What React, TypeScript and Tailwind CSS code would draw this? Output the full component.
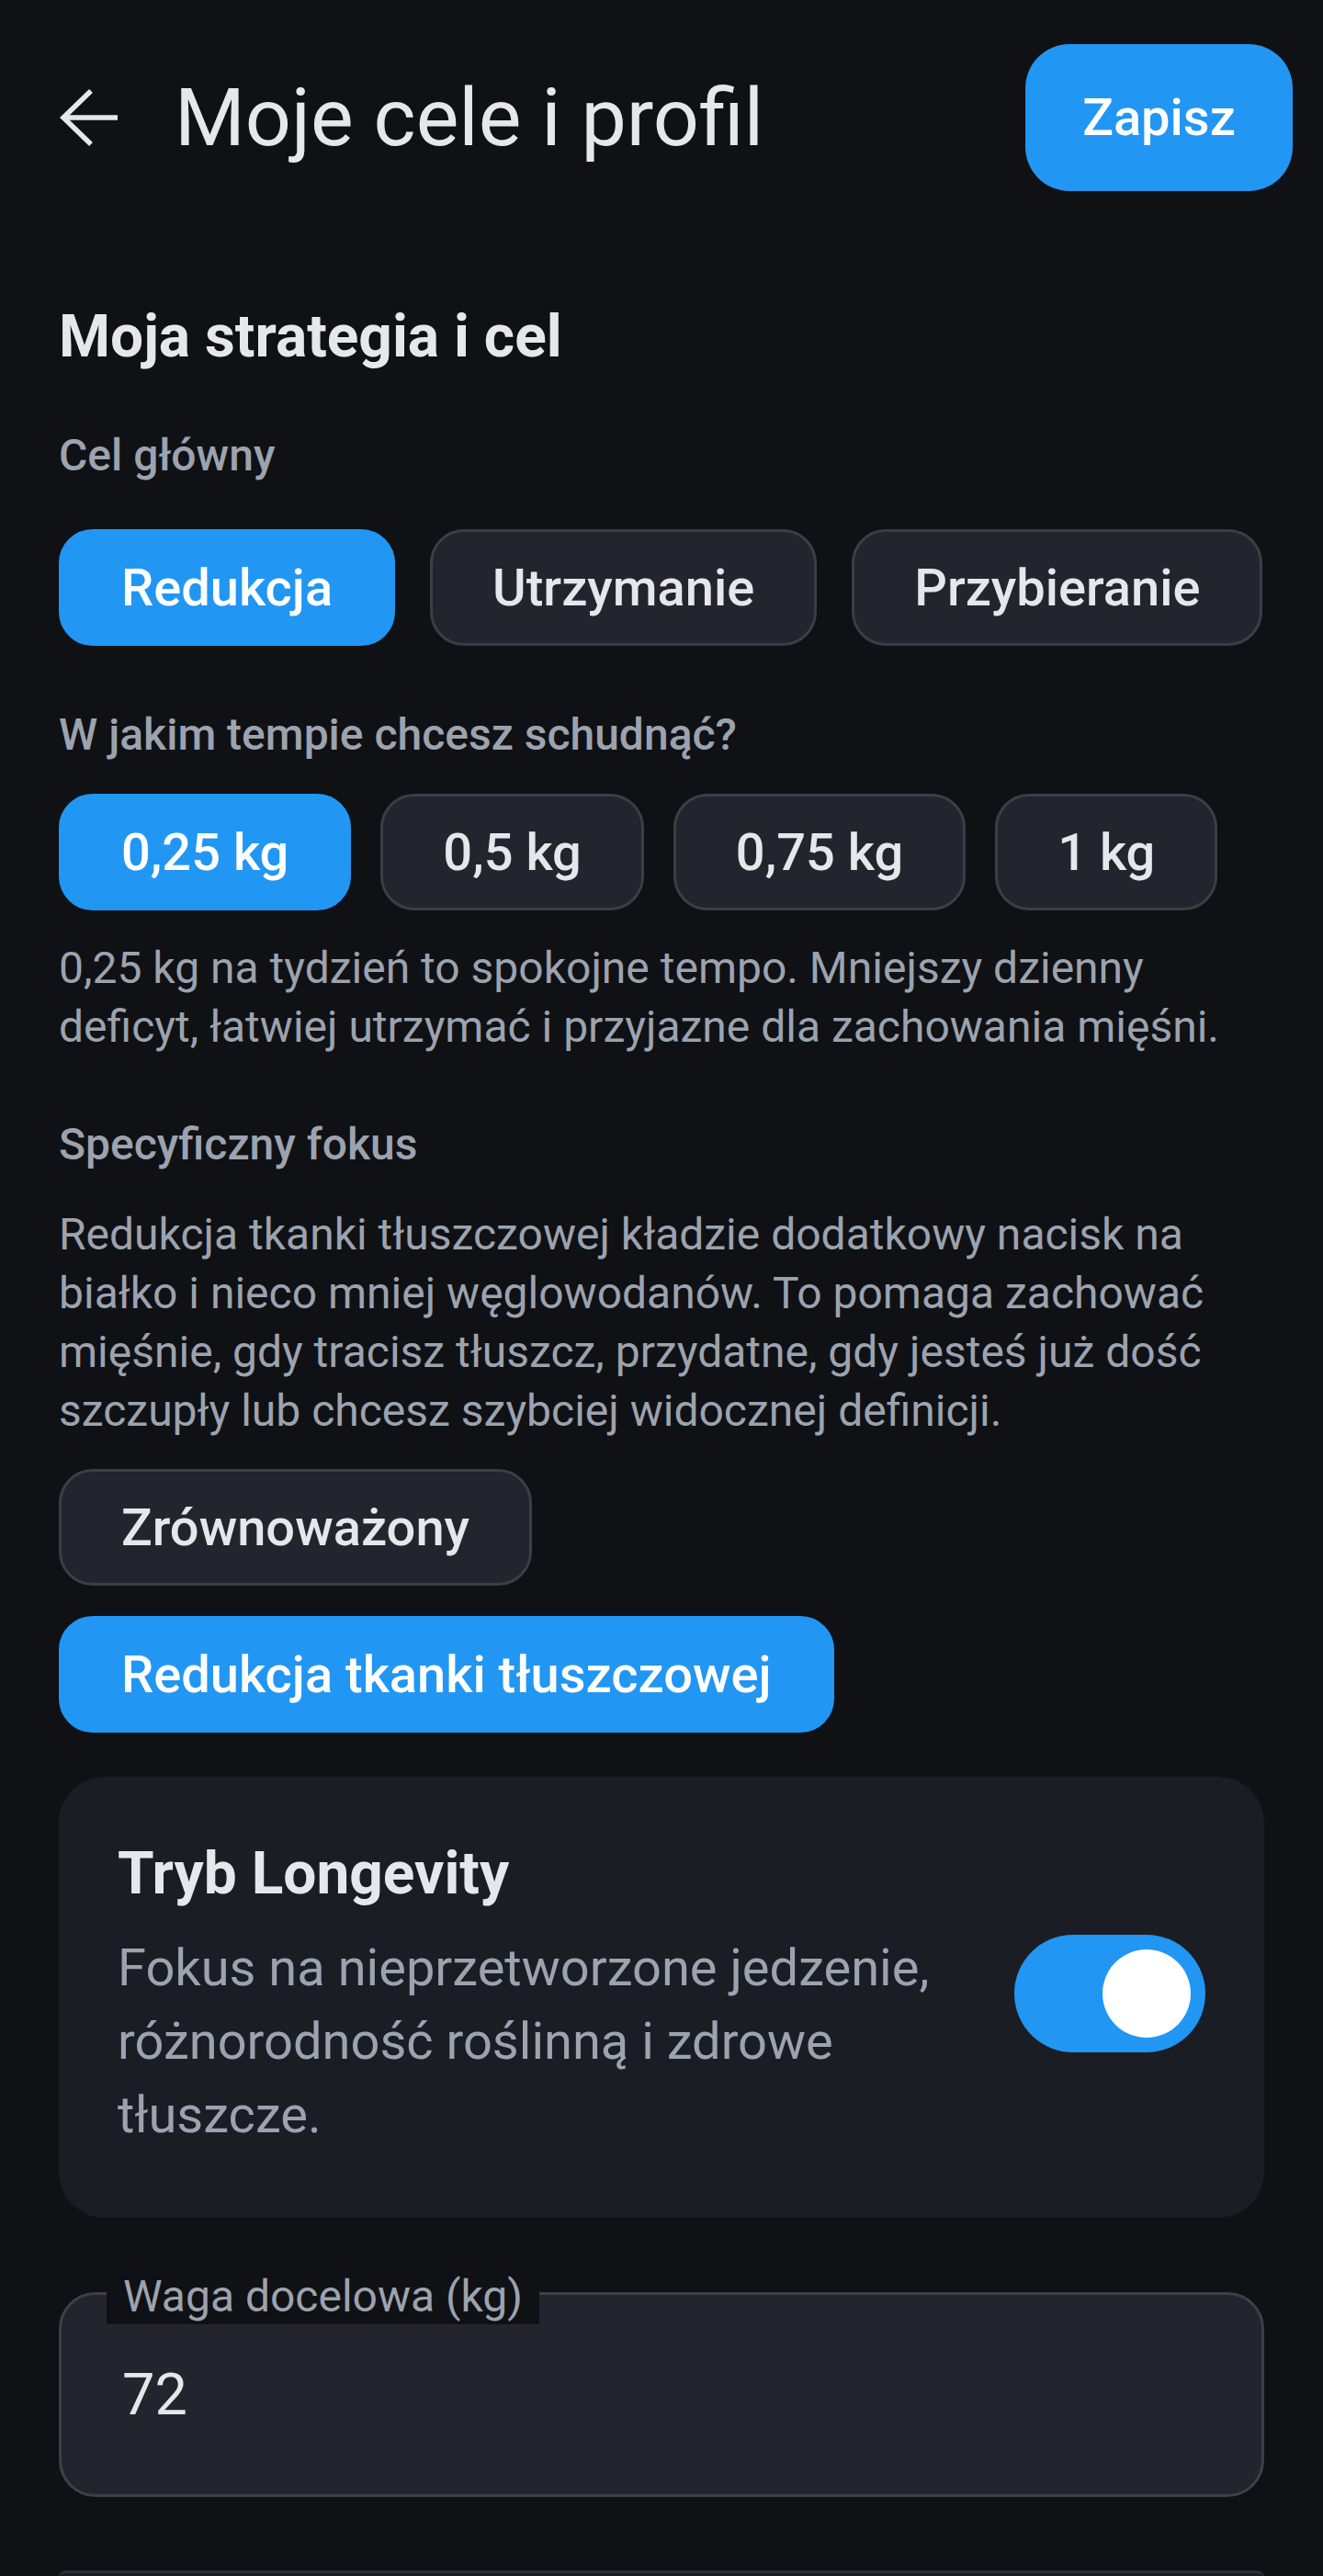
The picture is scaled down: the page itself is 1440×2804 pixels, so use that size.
import React from 'react'

const Chip: React.FC<{ label: string; active?: boolean }> = ({ label, active }) => (
  <button
    className={
      active
        ? 'h-[127px] px-[65px] rounded-[37px] border-[3px] border-[#2296f3] bg-[#2296f3] text-white text-[56px] font-medium leading-none whitespace-nowrap'
        : 'h-[127px] px-[65px] rounded-[37px] border-[3px] border-[#3b3e48] bg-[#22252e] text-[#e6e7eb] text-[56px] font-medium leading-none whitespace-nowrap'
    }
  >
    {label}
  </button>
)

export default function App() {
  const goals = ['Redukcja', 'Utrzymanie', 'Przybieranie']
  const paces = ['0,25 kg', '0,5 kg', '0,75 kg', '1 kg']

  return (
    <div className="min-h-screen bg-[#101115] font-['Roboto',sans-serif] text-[#e6e7eb]">
      {/* top bar */}
      <div className="flex items-center pl-[65px] pr-[33px] pt-[48px]">
        <svg width="63" height="64" viewBox="0 0 63 64" fill="none" stroke="#e6e7eb" strokeWidth="5.5">
          <path d="M34 3 L4 32 L34 61" />
          <path d="M4 32 H63" />
        </svg>
        <h1 className="ml-[62px] flex-1 text-[88px] leading-[100px] font-normal text-[#e6e7eb]">Moje cele i profil</h1>
        <button className="w-[291px] h-[160px] rounded-[48px] bg-[#2296f3] text-white text-[56px] font-medium">
          Zapisz
        </button>
      </div>

      <div className="px-[64px]">
        <h2 className="mt-[121px] text-[64px] leading-[76px] font-bold text-[#e6e7eb]">Moja strategia i cel</h2>

        <p className="mt-[59px] text-[48px] leading-[64px] font-medium text-[#9ca3af]">Cel główny</p>
        <div className="mt-[48px] flex gap-[38px]">
          {goals.map((g, i) => (
            <Chip key={g} label={g} active={i === 0} />
          ))}
        </div>

        <p className="mt-[65px] text-[48px] leading-[64px] font-medium text-[#9ca3af]">W jakim tempie chcesz schudnąć?</p>
        <div className="mt-[32px] flex gap-[32px]">
          {paces.map((p, i) => (
            <Chip key={p} label={p} active={i === 0} />
          ))}
        </div>
        <p className="mt-[31px] text-[48px] leading-[64px] text-[#9ca3af]">
          0,25 kg na tydzień to spokojne tempo. Mniejszy dzienny deficyt, łatwiej utrzymać i przyjazne dla zachowania mięśni.
        </p>

        <p className="mt-[64px] text-[48px] leading-[64px] font-medium text-[#9ca3af]">Specyficzny fokus</p>
        <p className="mt-[34px] text-[48px] leading-[64px] text-[#9ca3af]">
          Redukcja tkanki tłuszczowej kładzie dodatkowy nacisk na białko i nieco mniej węglowodanów. To pomaga zachować mięśnie, gdy tracisz tłuszcz, przydatne, gdy jesteś już dość szczupły lub chcesz szybciej widocznej definicji.
        </p>
        <div className="mt-[31px] flex flex-col items-start gap-[33px]">
          <Chip label="Zrównoważony" />
          <Chip label="Redukcja tkanki tłuszczowej" active />
        </div>

        {/* longevity card */}
        <div className="mt-[48px] rounded-[50px] bg-[#1b1d24] px-[64px] pt-[64px] pb-[72px] flex items-center gap-[48px]">
          <div className="flex-1">
            <p className="text-[64px] leading-[84px] font-bold text-[#e6e7eb]">Tryb Longevity</p>
            <p className="mt-[20px] text-[56px] leading-[80px] text-[#9ca3af]">
              Fokus na nieprzetworzone jedzenie, różnorodność roślinną i zdrowe tłuszcze.
            </p>
          </div>
          <div className="w-[208px] h-[128px] shrink-0 rounded-full bg-[#2296f3] flex items-center justify-end pr-[16px]">
            <div className="w-[96px] h-[96px] rounded-full bg-white" />
          </div>
        </div>

        {/* target weight field */}
        <div className="relative mt-[81px] h-[223px] rounded-[40px] border-[3px] border-[#3d404a] bg-[#22252e] flex items-center pl-[66px]">
          <span className="absolute left-[49px] top-[-28px] h-[60px] px-[18px] bg-[#101115] text-[48px] leading-[60px] text-[#9ca3af]">
            Waga docelowa (kg)
          </span>
          <span className="text-[63px] leading-[74px] text-[#e6e7eb]">72</span>
        </div>

        <div className="mt-[80px] h-[140px] rounded-t-[8px] border-t-[3px] border-[#2c2f38] bg-[#1b1d24]" />
      </div>
    </div>
  )
}
